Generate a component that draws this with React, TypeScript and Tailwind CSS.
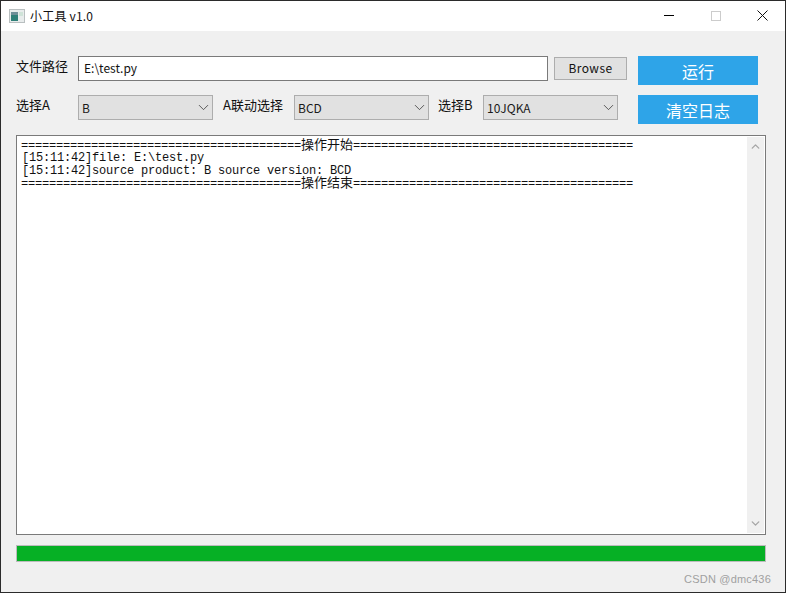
import React from "react";
import { ChevronDown, ChevronUp } from "lucide-react";

const uiFont = "font-['Microsoft_YaHei','Noto_Sans_CJK_SC',sans-serif]";

const Combo = ({ value, width }: { value: string; width: string }) => (
  <div
    className={`${width} h-[25px] flex items-center justify-between border border-[#adadad] bg-[#e1e1e1] pl-[3px] text-[12px] text-[#1a1a1a] font-['Noto_Sans_CJK_SC',sans-serif]`}
  >
    <span>{value}</span>
    <ChevronDown size={17} strokeWidth={1.1} className="text-[#333333]" />
  </div>
);

const Eq = () => <span>{"=".repeat(40)}</span>;

const Cjk = ({ text }: { text: string }) => (
  <span className="text-[13px] leading-[13px] tracking-normal font-['Noto_Sans_CJK_SC',sans-serif]">{text}</span>
);

const LogLine = ({ children, className }: { children: React.ReactNode; className?: string }) => (
  <div className={`h-[13px] flex items-baseline ${className ?? ""}`}>{children}</div>
);

export default function App() {
  return (
    <div className={`w-[786px] h-[593px] flex flex-col border border-[#2b2b2b] bg-[#f0f0f0] ${uiFont}`}>
      {/* title bar */}
      <div className="h-[30px] shrink-0 flex items-center bg-white pl-[8px]">
        <svg width="16" height="14" viewBox="0 0 16 14" className="mr-[5px]">
          <rect x="0.5" y="0.5" width="15" height="13" fill="#e8ecec" stroke="#b9bfc0" />
          <rect x="2" y="3" width="7" height="9" fill="#2f7f78" />
          <rect x="2" y="3" width="7" height="3" fill="#6f8f98" />
          <rect x="10" y="3" width="4" height="4" fill="#cfe3d8" />
        </svg>
        <span className="text-[12px] text-[#111] -mt-px tracking-[0.2px]">小工具 v1.0</span>
        <div className="ml-auto flex items-center -mt-px">
          <div className="w-[46px] h-[30px] flex items-center justify-center">
            <div className="w-[10px] h-px bg-black" />
          </div>
          <div className="w-[46px] h-[30px] flex items-center justify-center ml-[1px]">
            <div className="w-[10px] h-[10px] border border-[#cccccc]" />
          </div>
          <div className="w-[46px] h-[30px] flex items-center justify-center">
            <svg width="11" height="11" viewBox="0 0 11 11" stroke="#111" strokeWidth="1">
              <path d="M0.5 0.5L10.5 10.5M10.5 0.5L0.5 10.5" />
            </svg>
          </div>
        </div>
      </div>

      {/* body */}
      <div className="flex-1 flex flex-col px-[15px] pt-[25px]">
        <div className="flex">
          <div className="w-[611px] flex flex-col">
            <div className="flex items-center h-[25px]">
              <span className="w-[62px] text-[13px] text-[#111] -mt-[5px]">文件路径</span>
              <div className="w-[470px] h-[25px] flex items-center border border-[#7a7a7a] bg-white pl-[5px] pb-[2px] text-[12px] text-[#111]">
                E:\test.py
              </div>
              <button className="ml-[6px] w-[73px] h-[23px] border border-[#adadad] bg-[#e1e1e1] pb-[2px] text-[12px] text-[#111] tracking-[0.4px]">
                Browse
              </button>
            </div>
            <div className="flex items-center h-[25px] mt-[14px]">
              <span className="w-[62px] text-[13px] text-[#111] -mt-[5px]">选择A</span>
              <Combo value="B" width="w-[135px]" />
              <span className="ml-[10px] w-[71px] text-[13px] text-[#111] -mt-[5px]">A联动选择</span>
              <Combo value="BCD" width="w-[135px]" />
              <span className="ml-[9px] w-[45px] text-[13px] text-[#111] -mt-[5px]">选择B</span>
              <Combo value="10JQKA" width="w-[135px]" />
            </div>
          </div>
          <div className="ml-[11px] flex flex-col gap-[10px]">
            <button className="w-[120px] h-[29px] bg-[#2ea4e8] text-white text-[16px] leading-none">运行</button>
            <button className="w-[120px] h-[29px] bg-[#2ea4e8] text-white text-[16px] leading-none">清空日志</button>
          </div>
        </div>

        {/* log */}
        <div className="mt-[11px] w-[750px] h-[400px] shrink-0 flex border border-[#7a7a7a] bg-white">
          <div className="flex-1 pl-[4px] pt-[1px] text-[12px] leading-[13px] tracking-[-0.2px] text-[#111] font-['Liberation_Mono',monospace] whitespace-pre">
            <LogLine><Eq /><Cjk text="操作开始" /><Eq /></LogLine>
            <LogLine className="pl-[1px] pt-[2px]">[15:11:42]file: E:\test.py</LogLine>
            <LogLine className="pl-[1px] pt-[2px]">[15:11:42]source product: B source version: BCD</LogLine>
            <LogLine className="-mt-px"><Eq /><Cjk text="操作结束" /><Eq /></LogLine>
          </div>
          <div className="w-[17px] my-[1px] mr-px flex flex-col items-center justify-between bg-[#f0f0f0] text-[#a6a6a6] py-[3px]">
            <ChevronUp size={13} strokeWidth={2.5} />
            <ChevronDown size={13} strokeWidth={2.5} />
          </div>
        </div>

        {/* progress */}
        <div className="mt-[10px] w-[750px] h-[17px] shrink-0 border border-[#bcbcbc] bg-[#06b025]" />

        <div className="mt-[10px] -mr-[1px] text-right text-[11px] leading-[14px] tracking-[0.2px] text-[#a0a0a0] font-['Liberation_Sans',sans-serif]">
          CSDN @dmc436
        </div>
      </div>
    </div>
  );
}
